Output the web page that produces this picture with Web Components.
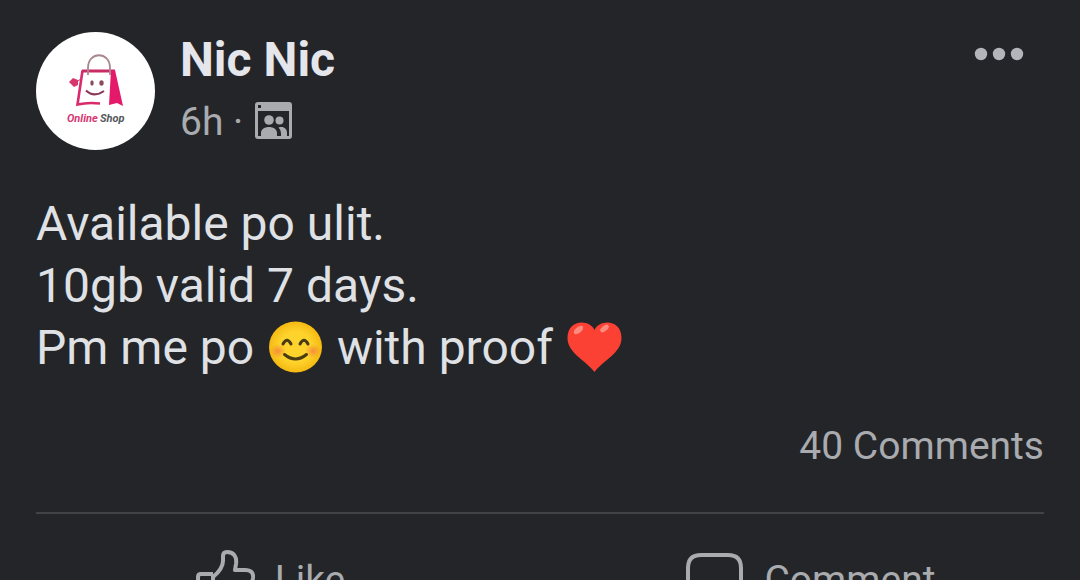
<!DOCTYPE html>
<html lang="en">
<head>
<meta charset="utf-8">
<meta name="viewport" content="width=device-width, initial-scale=1">
<title>Nic Nic</title>
<style>
  html, body { margin: 0; background: #242529; }
  body { height: 100vh; overflow: hidden; font-family: Roboto, "Liberation Sans", sans-serif; }
</style>
</head>
<body>
<feed-post></feed-post>

<template id="shop-avatar">
  <style>
    :host { display: block; flex: none; width: 119px; height: 118px; }
    svg { display: block; width: 100%; height: 100%; }
    text { font: italic 700 11px Roboto, sans-serif; }
  </style>
  <svg viewBox="0 0 119 118" role="img" aria-label="Online Shop">
    <ellipse cx="59.500" cy="59" rx="59.500" ry="59" fill="#fff"/>
    <path d="M46.500 38.500L41.500 72.500Q52 70 64 71.500" fill="none" stroke="#d92a6b" stroke-width="2.600"/>
    <path d="M46 39H79" stroke="#c92b64" stroke-width="3"/>
    <path d="M75 38H79L87 74L81 71L73 73Z" fill="#e5196a"/>
    <path d="M52 43V36C52 19 74 19 74 36V43" fill="none" stroke="#a8888f" stroke-width="1.800"/>
    <path d="M33 50l4-4 5 2v5l-4 2z" fill="#d8356c"/>
    <path d="M42 49l4-3" stroke="#d8356c"/>
    <ellipse cx="56" cy="51" rx="1.700" ry="2.800" fill="#8b4a60"/>
    <ellipse cx="65.500" cy="51" rx="2.200" ry="2.800" fill="#8b4a60"/>
    <path d="M50 58.500Q58 66 68 59" fill="none" stroke="#8b3557" stroke-width="2"/>
    <text x="31" y="90" fill="#d93674">Online</text>
    <text x="64" y="90" fill="#55585c">Shop</text>
  </svg>
</template>

<template id="post-header">
  <style>
    :host { display: flex; align-items: flex-start; gap: 25px; }
    .who { flex: 1; min-width: 0; }
    h1 { margin: 0 0 10px; font-size: 48px; line-height: 56px; font-weight: 700; color: #e4e6eb; }
    .meta { display: flex; align-items: flex-start; gap: 12px; font-size: 39px; line-height: 48px; color: #a9abaf; }
    .meta svg { display: block; width: 37px; height: 37px; margin-top: 4px; }
    button { border: 0; background: none; margin: 0; padding: 12px 17px; color: #b3b5ba; }
    button svg { display: block; width: 56px; height: 20px; }
  </style>
  <shop-avatar></shop-avatar>
  <div class="who">
    <h1><slot name="name"></slot></h1>
    <div class="meta"><slot name="time"></slot>
      <svg viewBox="0 0 37 37" role="img" aria-label="Group">
        <path fill="currentColor" fill-rule="evenodd" d="M3 0H34Q37 0 37 3V34Q37 37 34 37H3Q0 37 0 34V3Q0 0 3 0ZM3 9V34H34V9ZM3 3V6H6V3Z"/>
        <circle cx="14" cy="18" r="4.800" fill="currentColor"/>
        <circle cx="24.500" cy="18.500" r="4" fill="currentColor"/>
        <path fill="currentColor" d="M6 35V31C6 23 22 23 22 31V35ZM23.500 25.500C29 24 32 27 32 31V35H26V31Q26 28 23.500 25.500Z"/>
      </svg>
    </div>
  </div>
  <button type="button" aria-label="More options">
    <svg viewBox="0 0 56 20" fill="currentColor"><circle cx="10" cy="10" r="6.200"/><circle cx="28" cy="10" r="6.200"/><circle cx="46" cy="10" r="6.200"/></svg>
  </button>
</template>

<template id="post-emoji">
  <style>
    :host { display: inline-block; width: 59px; height: 54px; vertical-align: -10px; }
    svg { display: block; width: 100%; height: 100%; }
    :host([kind="smile"]) .heart, :host([kind="heart"]) .smile { display: none; }
  </style>
  <svg class="smile" viewBox="0 0 56 54" role="img" aria-label="😊">
    <defs>
      <radialGradient id="face"><stop offset="0.600" stop-color="#fed32c"/><stop offset="1" stop-color="#f5b912"/></radialGradient>
      <radialGradient id="blush"><stop offset="0" stop-color="#f4793f" stop-opacity=".75"/><stop offset="1" stop-color="#f4793f" stop-opacity="0"/></radialGradient>
    </defs>
    <ellipse cx="28" cy="27" rx="26.500" ry="25.500" fill="url(#face)"/>
    <ellipse cx="10.500" cy="31" rx="8" ry="7" fill="url(#blush)"/>
    <ellipse cx="45.500" cy="31" rx="8" ry="7" fill="url(#blush)"/>
    <g fill="none" stroke="#493c14" stroke-width="3" stroke-linecap="round">
      <path d="M15.500 24Q19.500 16.500 23.500 24M32.500 24Q36.500 16.500 40.500 24"/>
      <path d="M17 34.500Q28 43.500 39 34.500"/>
    </g>
  </svg>
  <svg class="heart" viewBox="0 0 56 54" role="img" aria-label="❤️">
    <path fill="#fb4133" d="M28 10C33-1 55-1 55 18C55 33 37 40 28 52C19 40 1 33 1 18C1-1 23-1 28 10Z"/>
    <ellipse cx="12" cy="10" rx="5.500" ry="3" transform="rotate(-38 12 10)" fill="#ff8b80"/>
    <ellipse cx="38" cy="8.500" rx="5" ry="2.600" transform="rotate(-38 38 8.500)" fill="#ff8b80"/>
  </svg>
</template>

<template id="post-action">
  <style>
    :host { flex: 1; display: block; }
    button { width: 100%; height: 96px; display: flex; align-items: center; justify-content: center; gap: 20px;
      border: 0; margin: 0; padding: 0; background: none; color: #a9abaf; font: 400 39px/48px Roboto, "Liberation Sans", sans-serif; }
    svg { width: 60px; height: 60px; fill: none; stroke: currentColor; stroke-width: 4; stroke-linejoin: round; }
    :host([icon="like"]) .comment, :host([icon="comment"]) .like { display: none; }
  </style>
  <button type="button">
    <svg class="like" viewBox="0 0 60 60" aria-hidden="true">
      <path d="M18 24H6Q3 24 3 27V52Q3 55 6 55H18M18 24V55M18 27C24 22 28 17 28 11V6Q28 2 32 2C39 2 42 7 41 14L40 20H50Q59 20 58 28L54 50Q53 57 46 57H28Q22 57 18 53"/>
    </svg>
    <svg class="comment" viewBox="0 0 60 60" aria-hidden="true">
      <path d="M17 5H44Q57 5 57 18V34Q57 47 44 47H34L22 57V47H17Q4 47 4 34V18Q4 5 17 5Z"/>
    </svg>
    <span><slot></slot></span>
  </button>
</template>

<template id="feed-post">
  <style>
    :host { display: block; padding-top: 32px; color: #dfe1e5; }
    post-header { padding: 0 36px; }
    p { margin: 43px 36px; font-size: 48px; line-height: 62px; }
    .count { display: block; margin: 0 36px; text-align: right; font-size: 39px; line-height: 48px; color: #a9abaf; text-decoration: none; }
    hr { margin: 42px 36px 0; border: 0; height: 2px; background: #424347; }
    .actions { display: flex; padding-top: 18px; }
  </style>
  <article>
    <post-header><span slot="name">Nic Nic</span><span slot="time">6h ·</span></post-header>
    <p>Available po ulit.<br>10gb valid 7 days.<br>Pm me po <post-emoji kind="smile"></post-emoji> with proof <post-emoji kind="heart"></post-emoji></p>
    <a class="count" href="#comments">40 Comments</a>
    <hr>
    <div class="actions">
      <post-action icon="like">Like</post-action>
      <post-action icon="comment">Comment</post-action>
    </div>
  </article>
</template>

<script>
  class TemplateElement extends HTMLElement {
    constructor() {
      super();
      const source = document.getElementById(this.localName);
      this.attachShadow({ mode: "open" }).append(source.content.cloneNode(true));
    }
  }
  for (const name of ["shop-avatar", "post-header", "post-emoji", "post-action", "feed-post"]) {
    customElements.define(name, class extends TemplateElement {});
  }
</script>
</body>
</html>
